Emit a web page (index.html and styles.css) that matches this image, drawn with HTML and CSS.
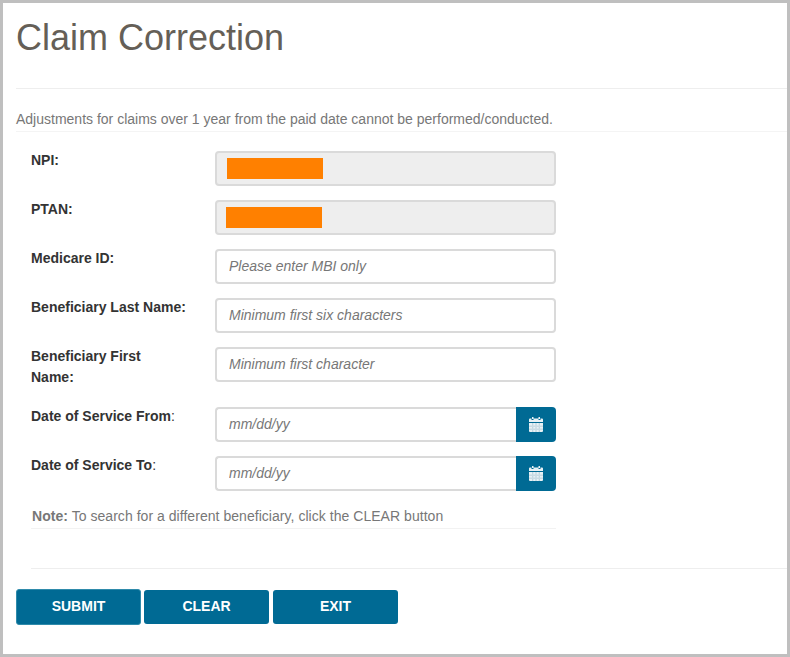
FILE: index.html
```html
<!DOCTYPE html>
<html lang="en">
<head>
    <meta charset="utf-8">
    <title>Claim Correction</title>
    <meta name="viewport" content="width=device-width, initial-scale=1">
    <link rel="stylesheet" href="styles.css">
</head>
<body>
    <div class="frame">
        <h1>Claim Correction</h1>
        <p class="notice">Adjustments for claims over 1 year from the paid date cannot be performed/conducted.</p>
        <form class="claim-form">
            <div class="row">
                <label>NPI:</label>
                <div class="field readonly"><span class="redact"></span></div>
            </div>
            <div class="row">
                <label>PTAN:</label>
                <div class="field readonly shift"><span class="redact"></span></div>
            </div>
            <div class="row">
                <label for="mbi">Medicare ID:</label>
                <input class="field" id="mbi" type="text" placeholder="Please enter MBI only">
            </div>
            <div class="row">
                <label for="lastName">Beneficiary Last Name:</label>
                <input class="field" id="lastName" type="text" placeholder="Minimum first six characters">
            </div>
            <div class="row tall">
                <label for="firstName">Beneficiary First<br>Name:</label>
                <input class="field" id="firstName" type="text" placeholder="Minimum first character">
            </div>
            <div class="row">
                <label for="dosFrom">Date of Service From<span class="colon">:</span></label>
                <div class="date-group">
                    <input class="field" id="dosFrom" type="text" placeholder="mm/dd/yy">
                    <button class="cal-btn" type="button" title="Open calendar">
                        <svg width="14" height="15" viewBox="0 0 14 15"><path fill="#e8f1f5" d="M3 0h1.500v2H3zM9.500 0H11v2H9.500zM1 1.500h1.500V3h2V1.500h5V3h2V1.500H13a1 1 0 0 1 1 1V5H0V2.500a1 1 0 0 1 1-1zM0 6h14v8a1 1 0 0 1-1 1H1a1 1 0 0 1-1-1z"/><path fill="#a9c6d4" d="M3.400 6v9h.8V6zM6.600 6v9h.8V6zM9.800 6v9h.8V6zM0 8.800h14v.8H0zM0 11.800h14v.8H0z"/></svg>
                    </button>
                </div>
            </div>
            <div class="row">
                <label for="dosTo">Date of Service To<span class="colon">:</span></label>
                <div class="date-group">
                    <input class="field" id="dosTo" type="text" placeholder="mm/dd/yy">
                    <button class="cal-btn" type="button" title="Open calendar">
                        <svg width="14" height="15" viewBox="0 0 14 15"><path fill="#e8f1f5" d="M3 0h1.500v2H3zM9.500 0H11v2H9.500zM1 1.500h1.500V3h2V1.500h5V3h2V1.500H13a1 1 0 0 1 1 1V5H0V2.500a1 1 0 0 1 1-1zM0 6h14v8a1 1 0 0 1-1 1H1a1 1 0 0 1-1-1z"/><path fill="#a9c6d4" d="M3.400 6v9h.8V6zM6.600 6v9h.8V6zM9.800 6v9h.8V6zM0 8.800h14v.8H0zM0 11.800h14v.8H0z"/></svg>
                    </button>
                </div>
            </div>
            <p class="note"><strong>Note:</strong> To search for a different beneficiary, click the CLEAR button</p>
        </form>
        <div class="divider"></div>
        <div class="actions">
            <button class="btn primary" type="button">SUBMIT</button>
            <button class="btn" type="button">CLEAR</button>
            <button class="btn exit" type="button">EXIT</button>
        </div>
    </div>
</body>
</html>
```

FILE: styles.css
```css
* {
    box-sizing: border-box;
}
body {
    margin: 0;
    background: #fff;
    font-family: "Liberation Sans", Arial, sans-serif;
}
.frame {
    height: 657px;
    border: 3px solid #bfbfbf;
    padding-left: 13px;
    overflow: hidden;
}
h1 {
    margin: 0;
    padding-top: 14px;
    height: 86px;
    border-bottom: 1px solid #eeeeee;
    font-size: 36px;
    line-height: 42px;
    font-weight: 400;
    color: #655f57;
}
.notice {
    margin: 0;
    height: 43px;
    padding-top: 21px;
    border-bottom: 1px solid #f4f4f4;
    font-size: 14px;
    line-height: 18px;
    color: #777777;
}
.claim-form {
    padding: 19px 0 0 15px;
    width: 540px;
}
.row {
    display: flex;
    height: 35px;
    margin-bottom: 14px;
}
.row.tall {
    margin-bottom: 25px;
}
.row label {
    width: 184px;
    margin-top: -1px;
    font-size: 14px;
    line-height: 21px;
    font-weight: 700;
    color: #333333;
}
.row .colon {
    font-weight: 400;
}
.field {
    width: 341px;
    height: 35px;
    padding: 0 12px 2px;
    border: 2px solid #dadada;
    border-radius: 4px;
    background: #fff;
    font-family: inherit;
    font-size: 14px;
    color: #333333;
}
.field::placeholder {
    font-style: italic;
    color: #777777;
    opacity: 1;
}
.field.readonly {
    display: flex;
    align-items: center;
    padding: 0 0 0 10px;
    background: #eeeeee;
}
.field.shift {
    padding-left: 9px;
}
.redact {
    width: 96px;
    height: 21px;
    background: #ff8000;
}
.date-group {
    display: flex;
    width: 341px;
}
.date-group .field {
    flex: 1;
    width: auto;
    border-right: 0;
    border-radius: 4px 0 0 4px;
}
.cal-btn {
    width: 40px;
    height: 35px;
    padding: 0;
    border: none;
    border-radius: 0 4px 4px 0;
    background: #006a94;
    display: flex;
    align-items: center;
    justify-content: center;
}
.note {
    margin: 0;
    height: 24px;
    padding: 2px 0 0 1px;
    border-bottom: 1px solid #f2f2f2;
    font-size: 14px;
    line-height: 18px;
    letter-spacing: 0.04px;
    color: #777777;
}
.divider {
    margin: 39px 0 0 15px;
    border-top: 1px solid #eeeeee;
}
.actions {
    padding-top: 20px;
    display: flex;
    align-items: center;
    gap: 3px;
}
.btn {
    width: 125px;
    height: 34px;
    padding: 0 0 2px;
    border: none;
    border-radius: 3px;
    background: #006a94;
    color: #fff;
    font-family: inherit;
    font-size: 14px;
    font-weight: 700;
    cursor: pointer;
}
.btn.primary {
    height: 36px;
    border: 1px solid #2f8bab;
}
.btn.exit {
    margin-left: 1px;
}
```
